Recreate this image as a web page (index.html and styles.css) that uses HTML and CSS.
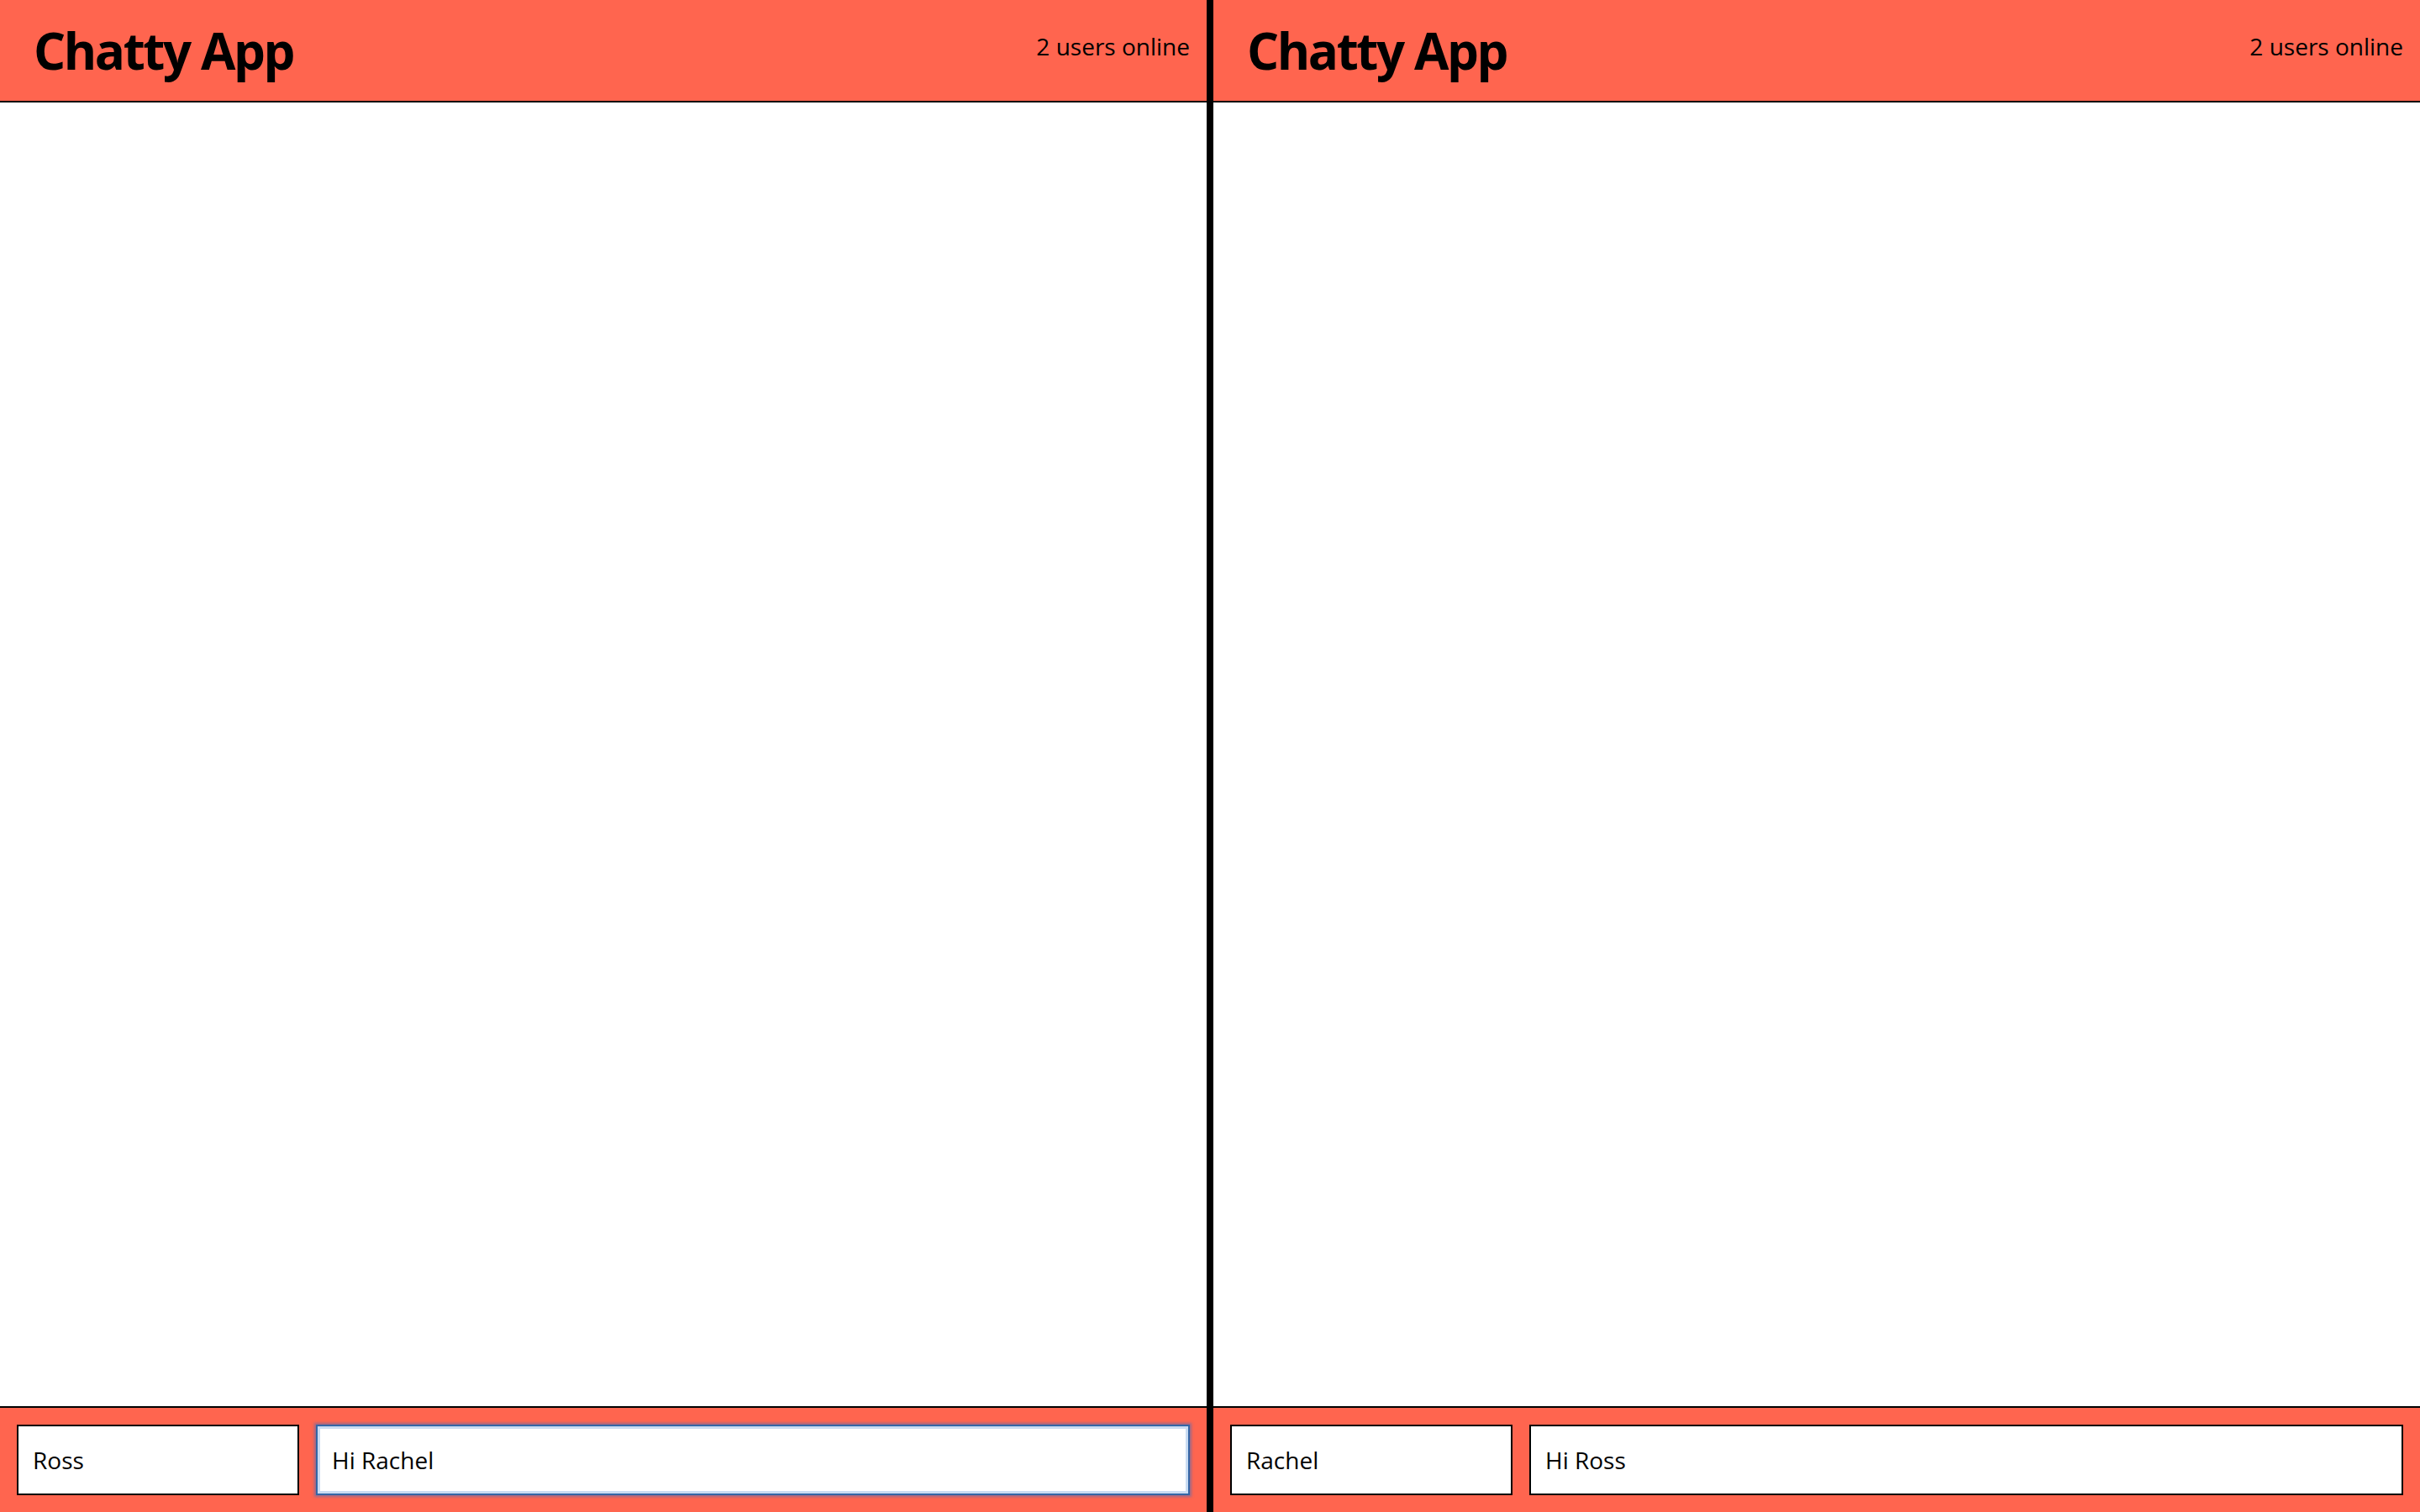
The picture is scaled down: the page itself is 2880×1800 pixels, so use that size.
FILE: index.html
```html
<!DOCTYPE html>
<html lang="en">
<head>
<meta charset="utf-8">
<title>Chatty App</title>
<link rel="stylesheet" href="styles.css">
</head>
<body>
<div class="screen">
  <section class="pane">
    <nav class="navbar">
      <h1 class="brand">Chatty App</h1>
      <span class="counter">2 users online</span>
    </nav>
    <main class="messages"></main>
    <footer class="chatbar">
      <input class="field username" type="text" value="Ross">
      <input class="field message focused" type="text" value="Hi Rachel">
    </footer>
  </section>
  <div class="divider"></div>
  <section class="pane">
    <nav class="navbar">
      <h1 class="brand">Chatty App</h1>
      <span class="counter">2 users online</span>
    </nav>
    <main class="messages"></main>
    <footer class="chatbar">
      <input class="field username" type="text" value="Rachel">
      <input class="field message" type="text" value="Hi Ross">
    </footer>
  </section>
</div>
</body>
</html>
```
FILE: styles.css
```css
* { box-sizing: border-box; }
html, body { margin: 0; padding: 0; background: #fff; }
body { font-family: "Open Sans", "Noto Sans", sans-serif; color: #000; }

.screen {
  display: flex;
  width: 2880px;
  height: 1800px;
  overflow: hidden;
}
.pane {
  flex: 1 1 0;
  display: flex;
  flex-direction: column;
  min-width: 0;
}
.divider {
  width: 8px;
  flex: 0 0 8px;
  background: #000;
}

.navbar {
  height: 122px;
  flex: 0 0 122px;
  background: #ff654f;
  border-bottom: 2px solid #000;
  display: flex;
  justify-content: space-between;
  align-items: flex-start;
  padding: 0 20px 0 40px;
}
.brand {
  margin: 0;
  padding-top: 19px;
  font-size: 60px;
  font-weight: 700;
  letter-spacing: -2.4px;
  line-height: normal;
}
.counter {
  padding-top: 36px;
  font-size: 28px;
  line-height: normal;
}

.messages { flex: 1 1 auto; }

.chatbar {
  flex: 0 0 126px;
  height: 126px;
  background: #ff654f;
  border-top: 2px solid #000;
  display: flex;
  gap: 20px;
  padding: 20px;
  align-items: flex-start;
}
.field {
  height: 84px;
  margin: 0;
  border: 2px solid #000;
  border-radius: 0;
  background: #fff;
  padding: 0 17px;
  font-family: "Open Sans", "Noto Sans", sans-serif;
  font-size: 28px;
  color: #000;
  outline: none;
}
.username { width: 336px; flex: 0 0 336px; }
.message { flex: 1 1 auto; min-width: 0; }
.focused {
  border-color: #3467a6;
  box-shadow: inset 0 0 0 3px #c9dcf3, 0 0 3px 2px rgba(70, 110, 190, 0.55);
}
```
